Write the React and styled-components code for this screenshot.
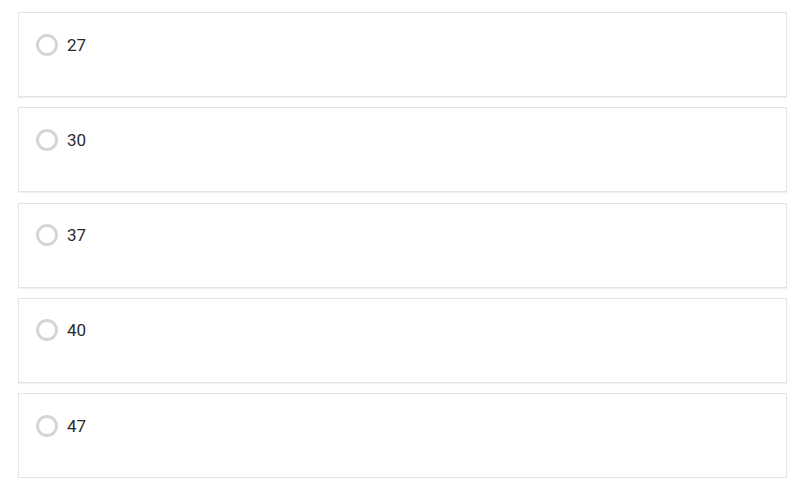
import React from "react";
import styled, { createGlobalStyle } from "styled-components";

const GlobalStyle = createGlobalStyle`
  body {
    margin: 0;
    background: #fff;
    font-family: Roboto, "Liberation Sans", sans-serif;
  }
`;

const options = ["27", "30", "37", "40", "47"];

function App() {
  return (
    <>
      <GlobalStyle />
      <List>
        {options.map((opt) => (
          <Card key={opt}>
            <Radio />
            <Label>{opt}</Label>
          </Card>
        ))}
      </List>
    </>
  );
}

const List = styled.div`
  display: flex;
  flex-direction: column;
  gap: 10.25px;
  padding: 12px 13px 0 18px;
`;
const Card = styled.label`
  display: flex;
  align-items: center;
  gap: 9px;
  height: 85px;
  box-sizing: border-box;
  padding: 0 0 20px 17px;
  border: 1px solid #e4e4e4;
  box-shadow: 0 1px 1px rgba(0, 0, 0, 0.06);
  background: #fff;
`;
const Radio = styled.span`
  width: 22px;
  height: 22px;
  box-sizing: border-box;
  border: 3px solid #d3d5da;
  border-radius: 50%;
`;
const Label = styled.span`
  font-size: 17px;
  color: #2b2b2b;
`;

export default App;
